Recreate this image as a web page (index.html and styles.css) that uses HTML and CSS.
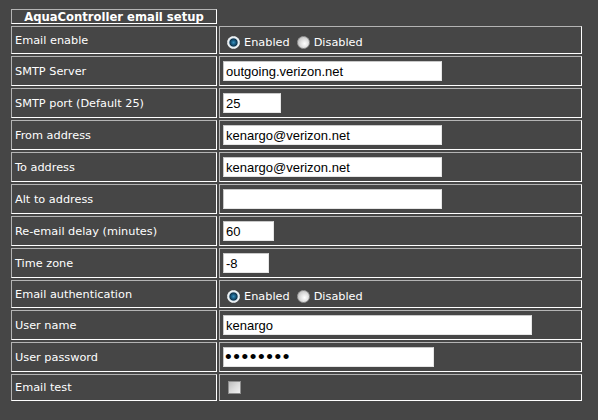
FILE: index.html
```html
<!DOCTYPE html>
<html>
<head>
<meta charset="utf-8">
<link rel="stylesheet" href="styles.css">
</head>
<body>
<div class="page">
  <div class="caption">AquaController email setup</div>
  <div class="form">
    <div class="cell label row-radio">Email enable</div>
    <div class="cell value row-radio">
      <label class="opt"><input type="radio" name="en" checked><span>Enabled</span></label>
      <label class="opt"><input type="radio" name="en"><span>Disabled</span></label>
    </div>

    <div class="cell label">SMTP Server</div>
    <div class="cell value"><input class="field w219" type="text" value="outgoing.verizon.net"></div>

    <div class="cell label">SMTP port (Default 25)</div>
    <div class="cell value"><input class="field w58" type="text" value="25"></div>

    <div class="cell label">From address</div>
    <div class="cell value"><input class="field w219" type="text" value="kenargo@verizon.net"></div>

    <div class="cell label">To address</div>
    <div class="cell value"><input class="field w219" type="text" value="kenargo@verizon.net"></div>

    <div class="cell label">Alt to address</div>
    <div class="cell value"><input class="field w219" type="text" value=""></div>

    <div class="cell label">Re-email delay (minutes)</div>
    <div class="cell value"><input class="field w51" type="text" value="60"></div>

    <div class="cell label">Time zone</div>
    <div class="cell value"><input class="field w46" type="text" value="-8"></div>

    <div class="cell label row-radio">Email authentication</div>
    <div class="cell value row-radio">
      <label class="opt"><input type="radio" name="auth" checked><span>Enabled</span></label>
      <label class="opt"><input type="radio" name="auth"><span>Disabled</span></label>
    </div>

    <div class="cell label">User name</div>
    <div class="cell value"><input class="field w309" type="text" value="kenargo"></div>

    <div class="cell label">User password</div>
    <div class="cell value"><input class="field pass w211" type="password" value="kenargo1"></div>

    <div class="cell label row-check">Email test</div>
    <div class="cell value row-check"><input class="check" type="checkbox"></div>
  </div>
</div>
</body>
</html>
```

FILE: styles.css
```css
html, body {
  margin: 0;
  padding: 0;
  background: #464646;
}

.page {
  padding: 9px 0 0 11px;
  font-family: "DejaVu Sans", Verdana, sans-serif;
  font-size: 11.3px;
  color: #ffffff;
}

.caption {
  box-sizing: border-box;
  width: 206px;
  height: 15px;
  border: 1px solid;
  border-color: #b4b4b4 #ffffff #ffffff #b4b4b4;
  font-weight: bold;
  font-size: 11.6px;
  line-height: 14px;
  text-align: center;
  margin-bottom: 2px;
}

.form {
  display: grid;
  grid-template-columns: 206px 363px;
  gap: 2px;
}

.cell {
  box-sizing: border-box;
  border: 1px solid;
  border-color: #b4b4b4 #ffffff #ffffff #b4b4b4;
  padding: 4px 3px;
  height: 30px;
  display: flex;
  align-items: center;
}

.cell.row-radio {
  height: 28px;
  padding-top: 4px;
  padding-bottom: 4px;
}

.cell.value.row-radio {
  padding-top: 7px;
  padding-bottom: 2px;
}

.cell.row-check {
  height: 27px;
}

.label {
  padding-left: 3px;
}

.field {
  box-sizing: border-box;
  height: 20px;
  margin: 0;
  padding: 0 2px;
  border: 1px solid;
  border-color: #c8c8c8 #e6e6e6 #e6e6e6 #c8c8c8;
  background: #ffffff;
  font-family: "Liberation Sans", Arial, sans-serif;
  font-size: 13px;
  color: #000000;
  outline: none;
}

.w219 { width: 219px; }
.w58 { width: 58px; }
.w51 { width: 51px; }
.w46 { width: 46px; }
.w309 { width: 309px; }
.w211 { width: 211px; }

.pass {
  font-size: 19px;
  letter-spacing: 1.6px;
  padding-left: 1px;
}

.opt {
  display: inline-flex;
  align-items: center;
  margin-right: 3px;
}

.opt input {
  -webkit-appearance: none;
  appearance: none;
  box-sizing: border-box;
  width: 13px;
  height: 13px;
  margin: 0 4px 0 4px;
  border-radius: 50%;
  border: 1px solid #9a9a9a;
  background: radial-gradient(circle at 60% 60%, #ffffff 0, #e2e2e2 40%, #b0b0b0 100%);
}

.opt input:checked {
  border-color: #e8eef2;
  background: radial-gradient(circle at 50% 50%, #3a92c0 0, #1a5f86 2px, #0d3550 3.6px, #cfdde6 4.6px, #ffffff 5.5px);
}

.check {
  -webkit-appearance: none;
  appearance: none;
  box-sizing: border-box;
  width: 13px;
  height: 13px;
  margin: 0 0 0 5px;
  border: 1px solid #8f8f8f;
  background: linear-gradient(135deg, #bdbdbd 0%, #dcdcdc 50%, #f2f2f2 100%);
}
```
